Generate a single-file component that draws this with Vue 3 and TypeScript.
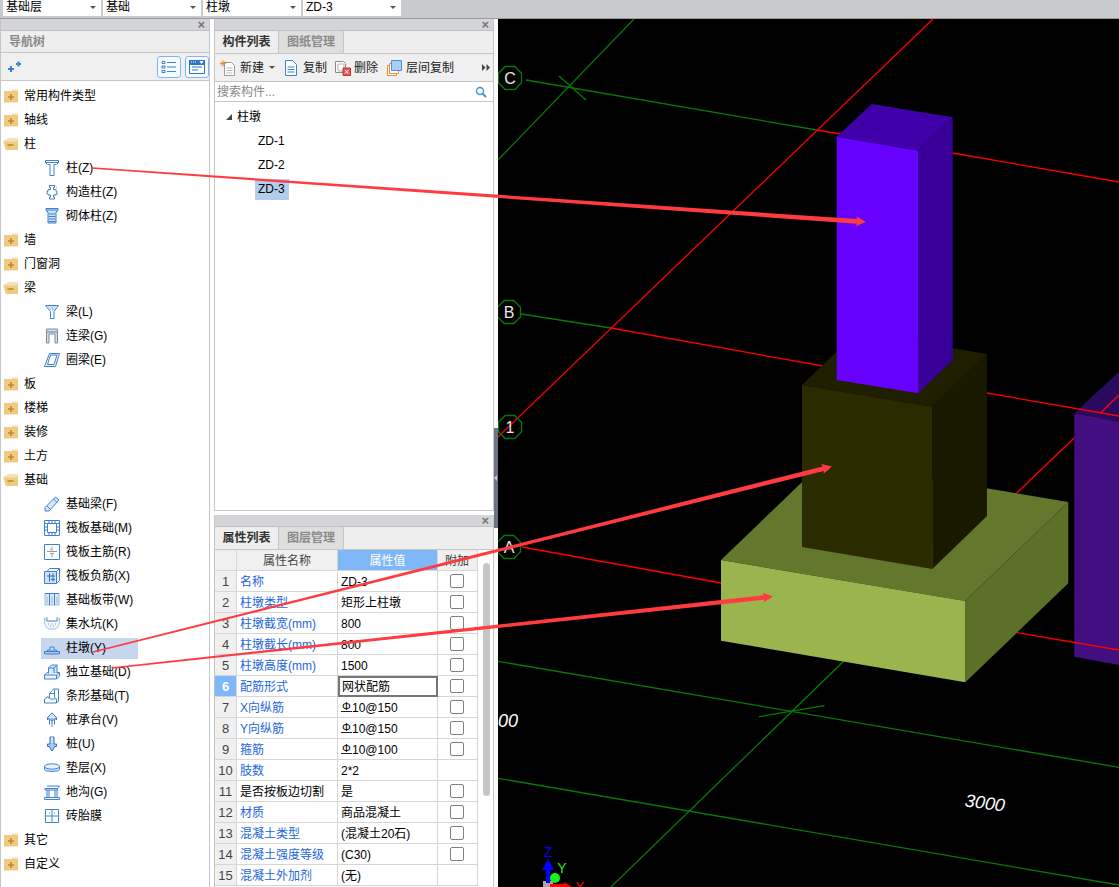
<template>
  <div class="app">
    <div class="topbar">
      <div v-for="d in dropdowns" :key="d" class="drop">
        <span>{{ d }}</span><i class="caret"></i>
      </div>
    </div>

    <div class="body">
      <!-- nav tree -->
      <section class="panel nav">
        <div class="panel-head"><span class="close">×</span></div>
        <div class="nav-title">导航树</div>
        <div class="nav-tools">
          <svg class="spark" viewBox="0 0 14 12" width="14" height="12">
            <path d="M0 8h6M3 5v6M8 3h5M10.500 .5v5" stroke="#3f80d0" stroke-width="2" fill="none" />
          </svg>
          <div class="nav-btns">
            <button class="view-btn">
              <svg viewBox="0 0 16 14" width="16" height="14">
                <path d="M1 1.500h3v2H1zM1 6h3v2H1zM1 10.500h3v2H1z" fill="none" stroke="#3f80d0" />
                <path d="M6 2.500h9M6 7h9M6 11.500h9" stroke="#3f80d0" />
              </svg>
            </button>
            <button class="view-btn">
              <svg viewBox="0 0 16 14" width="16" height="14">
                <path d="M.5 .5h15v13H.5z" fill="#fff" stroke="#2f74c8" />
                <path d="M.5 .5h15v4H.5z" fill="#2f74c8" stroke="#2f74c8" />
                <path d="M2 2h1M4 2h1M6 2h1M11 1.500h3l-1.500 2z" stroke="#fff" fill="#fff" />
                <path d="M3 7h10M3 10h6" stroke="#2f74c8" />
              </svg>
            </button>
          </div>
        </div>
        <div class="tree">
          <div v-for="row in navRows" :key="row.label" class="tree-row">
            <div v-if="row.kind !== 'item'" class="folder">
              <svg v-if="row.kind === 'closed'" viewBox="0 0 16 14" width="16" height="14">
                <path d="M9 .5h5.500v1.500H9z" fill="#f3d9a6" />
                <path d="M1 2h14v11.500H1z" fill="#efca80" />
                <path d="M8 5v6M5 8h6" stroke="#b98b2e" stroke-width="1.600" />
              </svg>
              <svg v-else viewBox="0 0 16 14" width="16" height="14">
                <path d="M1 3l5-2h9v10.500l-1 1.500H3z" fill="#f6e2b8" />
                <path d="M0 4.500h13l2 -1v8.500l-1 1H3z" fill="#efca80" />
                <path d="M4.500 8h6" stroke="#b98b2e" stroke-width="1.600" />
              </svg>
              <span>{{ row.label }}</span>
            </div>
            <div v-else class="item" :class="{ selected: row.selected }">
              <svg viewBox="0 0 16 16" width="16" height="16">
                <path
                  v-for="(s, i) in icons[row.icon!]"
                  :key="i"
                  :d="s.d"
                  :fill="s.fill ?? 'none'"
                  :stroke="s.stroke ?? '#3f80d0'"
                />
              </svg>
              <span>{{ row.label }}</span>
            </div>
          </div>
        </div>
      </section>

      <!-- middle column -->
      <div class="middle">
        <section class="panel comp">
          <div class="panel-head"><span class="close">×</span></div>
          <div class="tabs">
            <div class="tab active">构件列表</div>
            <div class="tab">图纸管理</div>
          </div>
          <div class="comp-tools">
            <div class="tool t-new">
              <svg viewBox="0 0 16 16" width="16" height="16">
                <path d="M4.500 2.500h7l3 3v10h-10z" fill="#fff" stroke="#9a9a9a" />
                <path d="M6.500 8h6M6.500 10.500h6M6.500 13h6" stroke="#b5b5b5" />
                <path d="M3 .5v6M0 3.500h6M1 1.500l4 4M5 1.500l-4 4" stroke="#f08a24" />
              </svg>
              <span>新建</span><i class="caret small"></i>
            </div>
            <div class="tool t-copy">
              <svg viewBox="0 0 14 16" width="14" height="16">
                <path d="M1.500 .5h7l4 4v11h-11z" fill="#fff" stroke="#3f80d0" />
                <path d="M3.500 7h7M3.500 9.500h7M3.500 12h7" stroke="#3f80d0" />
              </svg>
              <span>复制</span>
            </div>
            <div class="tool t-del">
              <svg viewBox="0 0 16 16" width="16" height="16">
                <path d="M.5 1.500h8l2 2v9h-10z" fill="#fff" stroke="#8a8a8a" />
                <path d="M3 4h6v7H3z" fill="none" stroke="#b5b5b5" />
                <path d="M8 8h7.500v7.500H8z" fill="#e0555a" stroke="#c33" />
                <path d="M10 10l3.500 3.500M13.500 10L10 13.500" stroke="#fff" />
              </svg>
              <span>删除</span>
            </div>
            <div class="tool t-floor">
              <svg viewBox="0 0 15 16" width="15" height="16">
                <path d="M.5 5.500h9v10h-9z" fill="#fff" stroke="#ef8a3a" />
                <path d="M2.500 3.500h9v10h-9z" fill="#fff" stroke="#ef8a3a" />
                <path d="M4.500 .5h10v10h-10z" fill="#a8cdf6" stroke="#4a8ee0" />
              </svg>
              <span>层间复制</span>
            </div>
            <svg class="more" viewBox="0 0 8 7" width="8" height="7">
              <path d="M0 0l3.500 3.500L0 7zM4.500 0L8 3.500 4.500 7z" fill="#444" />
            </svg>
          </div>
          <div class="search">
            <span>搜索构件...</span>
            <svg viewBox="0 0 12 12" width="12" height="12">
              <circle cx="5" cy="5" r="3.500" fill="none" stroke="#4a97cf" stroke-width="1.500" />
              <path d="M7.500 7.500L11 11" stroke="#4a97cf" stroke-width="2" />
            </svg>
          </div>
          <div class="comp-tree">
            <div class="comp-root"><i class="tri"></i>柱墩</div>
            <div v-for="c in comps" :key="c" class="comp-row">
              <span :class="{ picked: c === 'ZD-3' }">{{ c }}</span>
            </div>
          </div>
        </section>

        <section class="panel props">
          <div class="panel-head"><span class="close">×</span></div>
          <div class="tabs props-tabs">
            <div class="tab active">属性列表</div>
            <div class="tab">图层管理</div>
          </div>
          <div class="prop-wrap">
            <div class="prop-table">
              <div class="prop-row head">
                <div class="cell num"></div>
                <div class="cell name">属性名称</div>
                <div class="cell val">属性值</div>
                <div class="cell add">附加</div>
              </div>
              <div v-for="(p, i) in propRows" :key="p.name" class="prop-row">
                <div class="cell num" :class="{ cur: i === 5 }">{{ i + 1 }}</div>
                <div class="cell name" :class="{ plain: p.plain }">{{ p.name }}</div>
                <div class="cell val" :class="{ editing: i === 5 }">
                  <span v-if="p.rebar" class="rebar">Φ</span>{{ p.value }}
                </div>
                <div class="cell add"><i v-if="p.check" class="check"></i></div>
              </div>
            </div>
            <div class="scroll"><div class="thumb"></div></div>
          </div>
        </section>
      </div>

      <div class="splitter"><div class="grip"><i></i></div></div>

      <!-- 3d view -->
      <div class="view">
        <svg viewBox="498 19 621 868" width="621" height="868">
          <g fill="none" stroke-width="1.300">
            <path v-for="(l, i) in greenLines" :key="'g' + i" :d="l" stroke="#067a06" />
            <path v-for="(l, i) in redLines" :key="'r' + i" :d="l" stroke="#ff0000" />
          </g>

          <polygon points="1074.300,413.300 1119,371.700 1119,421.600" fill="#2a0a5e" />
          <polygon points="1074.300,413.300 1119,421.600 1119,665 1074.300,656.700" fill="#430f80" />
          <path d="M1100 413.500L1119 395M987 393L1119 416M1016.700 632.700L1119 650" stroke="#ff0000" stroke-width="1.300" fill="none" />

          <polygon points="721,560 824,461 1068.300,502 965.300,601" fill="#63772d" />
          <polygon points="965.300,601 1068.300,502 1068.300,583.300 965.300,682.300" fill="#5d7028" />
          <polygon points="721,560 965.300,601 965.300,682.300 721,640.700" fill="#9ab54e" />

          <polygon points="802,385 856.700,332.300 987,354 932.300,406.700" fill="#1f1f00" />
          <polygon points="932.300,406.700 987,354 987,516 932.300,569" fill="#191900" />
          <polygon points="802,385 932.300,406.700 932.300,569 802,547" fill="#2b2b00" />

          <polygon points="836.700,136.700 871.700,104 952.700,117.300 918.300,150.700" fill="#3f00aa" />
          <polygon points="918.300,150.700 952.700,117.300 952.700,360 918.300,393.300" fill="#380099" />
          <polygon points="836.700,136.700 918.300,150.700 918.300,393.300 836.700,380" fill="#6600ff" />

          <g v-for="a in axes" :key="a.label">
            <polygon :points="octagon(a.x, a.y)" fill="none" stroke="#067a06" stroke-width="1.300" />
            <text :x="a.x" :y="a.y + 6" class="axis-label">{{ a.label }}</text>
          </g>

          <text x="518" y="727" class="dim" text-anchor="end">00</text>
          <text x="985" y="809" class="dim" text-anchor="middle" transform="rotate(8 985 803)">3000</text>

          <!-- gizmo -->
          <text x="548" y="857" class="giz" fill="#0000ff" text-anchor="middle">Z</text>
          <path d="M543 881h10v6h-10z" fill="#a8a8a8" />
          <path d="M548 859l6 11h-4v13h-4v-13h-4z" fill="#0000ff" />
          <circle cx="555" cy="878" r="5" fill="#18f018" />
          <text x="562" y="873" class="giz" fill="#18f018" text-anchor="middle">Y</text>
          <path d="M550 884h14v-2l8 5h-22z" fill="#ff0000" />
          <text x="580" y="892" class="giz" fill="#ff0000" text-anchor="middle">X</text>
        </svg>
      </div>
    </div>

    <!-- annotation arrows drawn over the whole window -->
    <svg class="notes" viewBox="0 0 1119 887" width="1119" height="887">
      <polygon v-for="(a, i) in arrows" :key="i" :points="arrow(a)" fill="#ff3b40" />
    </svg>
  </div>
</template>

<script setup lang="ts">
type Shape = { d: string; fill?: string; stroke?: string }
type NavRow = {
  kind: 'closed' | 'open' | 'item'
  label: string
  icon?: string
  selected?: boolean
}

const dropdowns = ['基础层', '基础', '柱墩', 'ZD-3']

const folder = (label: string, kind: 'closed' | 'open' = 'closed'): NavRow => ({ kind, label })
const item = (label: string, icon: string, selected = false): NavRow => ({
  kind: 'item',
  label,
  icon,
  selected,
})

const navRows: NavRow[] = [
  folder('常用构件类型'),
  folder('轴线'),
  folder('柱', 'open'),
  item('柱(Z)', 'col'),
  item('构造柱(Z)', 'tie'),
  item('砌体柱(Z)', 'brick'),
  folder('墙'),
  folder('门窗洞'),
  folder('梁', 'open'),
  item('梁(L)', 'beam'),
  item('连梁(G)', 'link'),
  item('圈梁(E)', 'ring'),
  folder('板'),
  folder('楼梯'),
  folder('装修'),
  folder('土方'),
  folder('基础', 'open'),
  item('基础梁(F)', 'pencil'),
  item('筏板基础(M)', 'raft'),
  item('筏板主筋(R)', 'rmain'),
  item('筏板负筋(X)', 'rneg'),
  item('基础板带(W)', 'strip'),
  item('集水坑(K)', 'pit'),
  item('柱墩(Y)', 'pier', true),
  item('独立基础(D)', 'iso'),
  item('条形基础(T)', 'bar'),
  item('桩承台(V)', 'cap'),
  item('桩(U)', 'pile'),
  item('垫层(X)', 'pad'),
  item('地沟(G)', 'ditch'),
  item('砖胎膜', 'mould'),
  folder('其它'),
  folder('自定义'),
]

const icons: Record<string, Shape[]> = {
  col: [{ d: 'M1.500 .5h13v2l-2 2h-2.500v11h-4v-11H3.500l-2-2zM1.500 2.500h13' }],
  tie: [
    { d: 'M5.500 1.500h5v2h-1v2h2.500v2h1v2h-1v1.500H9.500v2h1v2h-5v-2h1v-2H4v-1.500H3v-2h1v-2h2.500v-2h-1z' },
    { d: 'M11 1.500c2 1 2 3 1 4M13 7c1 2 1 3 0 5', stroke: '#b9cfe8' },
  ],
  brick: [
    { d: 'M2 .5h12v2l-2 1.500v11H4V4L2 2.500z', fill: '#cfe1f5' },
    { d: 'M2 2h12', stroke: '#3f80d0' },
    { d: 'M4.500 6h7M4.500 8.500h7M4.500 11h7M4.500 13.500h7', stroke: '#3f80d0' },
  ],
  beam: [
    { d: 'M1.500 1.500h13l-4.500 6v7H6.500v-7z' },
    { d: 'M3.500 3h9M5 5h6M8 3l1 4', stroke: '#9cc0e8' },
  ],
  link: [
    { d: 'M2.500 1v14h2.500V6h6v9h2.500V1z', fill: '#d7dde3', stroke: '#7f8c99' },
    { d: 'M3 4h10', stroke: '#3f80d0' },
  ],
  ring: [
    { d: 'M5.500 1.500h10l-4 13H.5z', fill: '#eaf2fb' },
    { d: 'M6.500 3h6.500l-3 9.500H3.500z', fill: '#fff' },
  ],
  pencil: [
    { d: 'M11.500 1l3.500 3L5 15H1v-3.500z', fill: '#dbe8f7' },
    { d: 'M9.500 3l3.500 3.500M3 10l3 3' },
  ],
  raft: [
    { d: 'M.5 .5h15v15H.5z', fill: '#fff' },
    { d: 'M3.500 3.500h9v9h-9z' },
    { d: 'M.5 3.500h3M.5 7h3M.5 10h3M12.500 3.500h3M12.500 7h3M12.500 10h3M5 .5v3M8 .5v3M11 .5v3M5 12.500v3M8 12.500v3M11 12.500v3' },
  ],
  rmain: [
    { d: 'M.5 .5h15v15H.5z', fill: '#fff' },
    { d: 'M8 2.500v4.500M8 9v4.500M3 7.500h10M6 9.500h4M6 5.500h1', stroke: '#9a9a9a' },
  ],
  rneg: [
    { d: 'M.5 3.500h12v12H.5z', fill: '#cfe1f5' },
    { d: 'M3 3.500l2.500-3h10v12l-3 3M12.500 3.500l3-3' },
    { d: 'M5.500 5.500v8M9 5.500v8M3 8h8M7 11.500h4', stroke: '#2f6cb8' },
  ],
  strip: [
    { d: 'M1 1.500h14v11.500H1z', fill: '#d9e7f6', stroke: '#9fbfe2' },
    { d: 'M1 1.500h14', stroke: '#3f80d0' },
    { d: 'M5.500 2v11M10.500 2v11', stroke: '#3f80d0' },
    { d: 'M3 4.500v7M8 4.500v7M13 4.500v7', stroke: '#9fbfe2' },
  ],
  pit: [
    { d: 'M.5 2c1 0 2 1 2 3h11c0-2 1-3 2-3v3c0 5-3 8-5 8H5.500c-2 0-5-3-5-8z', fill: '#f4f7fb', stroke: '#9fbfe2' },
    { d: 'M3 1v4h10V1M4 8h1M8 8h1M11 8h1M6 10h1M9 10h1', stroke: '#6d9bd0' },
  ],
  pier: [
    { d: 'M.5 11.500h15v2.500H.5z', fill: '#a9c7ea' },
    { d: 'M3.500 11.500v-1.500h9v1.500' },
    { d: 'M6 10V7h4v3', fill: '#cfe1f5' },
  ],
  iso: [
    { d: 'M.5 11l2.500-2.500h12.500v3.500l-3 3H.5z', fill: '#eaf2fb' },
    { d: 'M.5 11h12v4M12.500 11l3-2.500' },
    { d: 'M4.500 9.500V4L7.500 1h5.500v7.500', fill: '#dbe8f7' },
    { d: 'M4.500 4h5.500v5M10 4l3-3' },
  ],
  bar: [
    { d: 'M.5 15v-4l3-2 2 .5v-4L9.500 1h5v12l-2 2z', fill: '#fff' },
    { d: 'M5.500 5.500h5v-4M10.500 5.500v4l2 1.500v4M3.500 9l3 2h5' },
  ],
  cap: [
    { d: 'M8 1l4.500 4.500L8 9 3.500 5.500z', fill: '#dbe8f7' },
    { d: 'M3.500 5.500v2.500L5 6.500M12.500 5.500V8L11 6.500M8 6v9M5.500 7.500v5M10.500 7.500v5' },
  ],
  pile: [
    { d: 'M6 1h4v7h2.500v2.500h-2l-1 2.500L8 15l-1.500-2-1-2.500h-2V8H6z', fill: '#a9c7ea', stroke: '#2f74c8' },
    { d: 'M8 1v6', stroke: '#fff' },
  ],
  pad: [
    { d: 'M.5 6.500v3c0 2.500 15 2.500 15 0v-3z', fill: '#dbe8f7' },
    { d: 'M.5 6.500c0-3.500 15-3.500 15 0s-15 3.500-15 0z', fill: '#eaf2fb' },
  ],
  ditch: [
    { d: 'M.5 13.500h15v2H.5z', fill: '#fff' },
    { d: 'M1 4.500h12.500v1.500H1zM13.500 4.500l2-2.500M3 6v7.500h2V6M11 6v7.500h2V6M3 2h12.500' },
  ],
  mould: [{ d: 'M1.500 1.500h13v13h-13zM8 1.500v13M1.500 8h13M5 5h1M10 5h1' }],
}

const comps = ['ZD-1', 'ZD-2', 'ZD-3']

type PropRow = { name: string; value: string; check?: boolean; plain?: boolean; rebar?: boolean }
const propRows: PropRow[] = [
  { name: '名称', value: 'ZD-3', check: true },
  { name: '柱墩类型', value: '矩形上柱墩', check: true },
  { name: '柱墩截宽(mm)', value: '800', check: true },
  { name: '柱墩截长(mm)', value: '800', check: true },
  { name: '柱墩高度(mm)', value: '1500', check: true },
  { name: '配筋形式', value: '网状配筋', check: true },
  { name: 'X向纵筋', value: '10@150', check: true, rebar: true },
  { name: 'Y向纵筋', value: '10@150', check: true, rebar: true },
  { name: '箍筋', value: '10@100', check: true, rebar: true },
  { name: '肢数', value: '2*2' },
  { name: '是否按板边切割', value: '是', check: true, plain: true },
  { name: '材质', value: '商品混凝土', check: true },
  { name: '混凝土类型', value: '(混凝土20石)', check: true },
  { name: '混凝土强度等级', value: '(C30)', check: true },
  { name: '混凝土外加剂', value: '(无)' },
]

const greenLines = [
  'M526 80L816.700 130',
  'M521 314L611 328',
  'M498 661.300L1119 767.300',
  'M498 778.300L1119 885',
  'M843.600 661.300L611 887',
  'M759 716.700L824.500 705.700',
  'M634 19L498 160',
  'M559 76L586 100',
]
const redLines = [
  'M816.700 130L840 134M952.700 153L1119 182',
  'M611 328L823 366',
  'M522 547L721 583',
  'M498 437L933 19',
  'M1016.700 493L1119 395',
]

const axes = [
  { label: 'C', x: 510, y: 78 },
  { label: 'B', x: 509, y: 312 },
  { label: '1', x: 510, y: 427 },
  { label: 'A', x: 509, y: 547 },
]

function octagon(cx: number, cy: number) {
  const r = 12.500
  const pts: string[] = []
  for (let i = 0; i < 8; i++) {
    const t = ((i + 0.5) * Math.PI) / 4
    pts.push(`${(cx + r * Math.cos(t)).toFixed(1)},${(cy + r * Math.sin(t)).toFixed(1)}`)
  }
  return pts.join(' ')
}

type Arrow = { x1: number; y1: number; x2: number; y2: number }
const arrows: Arrow[] = [
  { x1: 92, y1: 168, x2: 866, y2: 222 },
  { x1: 93, y1: 652, x2: 832, y2: 466.500 },
  { x1: 112, y1: 668, x2: 773, y2: 596.500 },
]

// tapered stroke with a barbed head, thin at the start
function arrow({ x1, y1, x2, y2 }: Arrow) {
  const len = Math.hypot(x2 - x1, y2 - y1)
  const ux = (x2 - x1) / len
  const uy = (y2 - y1) / len
  const at = (along: number, side: number) =>
    `${(x2 - ux * along - uy * side).toFixed(1)},${(y2 - uy * along + ux * side).toFixed(1)}`
  return [
    at(len, -0.8),
    at(9, -2.3),
    at(10, -5),
    at(0, 0),
    at(10, 5),
    at(9, 2.3),
    at(len, 0.8),
  ].join(' ')
}
</script>

<style>
html,
body {
  margin: 0;
  background: #fff;
}
</style>

<style scoped>
.app {
  position: relative;
  display: flex;
  flex-direction: column;
  width: 1119px;
  height: 887px;
  overflow: hidden;
  background: #fff;
  font: 12px/16px 'Liberation Sans', 'Noto Sans CJK SC', sans-serif;
  color: #000;
}

.topbar {
  display: flex;
  flex: none;
  gap: 2px;
  box-sizing: border-box;
  height: 19px;
  padding: 0 0 0 3px;
  background: #c9cacc;
  border-bottom: 1px solid #9c9c9c;
}
.drop {
  display: flex;
  align-items: center;
  justify-content: space-between;
  box-sizing: border-box;
  width: 98px;
  height: 16px;
  padding: 0 5px 2px 3px;
  background: #fff;
}
.caret {
  width: 0;
  height: 0;
  border: 3px solid transparent;
  border-top: 3.500px solid #555;
  border-bottom: 0;
}

.body {
  display: flex;
  flex: 1;
  min-height: 0;
}

.panel {
  display: flex;
  flex-direction: column;
  box-sizing: border-box;
  border-left: 1px solid #c6c6c6;
  border-right: 1px solid #c6c6c6;
}
.panel-head {
  flex: none;
  display: flex;
  justify-content: flex-end;
  align-items: center;
  height: 11px;
  padding-right: 4px;
  background: #d3d5d9;
  border-bottom: 1px solid #c0c0c0;
}
.close {
  font: bold 13px/11px 'Liberation Sans', sans-serif;
  color: #777;
}

.nav {
  width: 210px;
  flex: none;
  margin-right: 4px;
}
.nav-title {
  flex: none;
  height: 21px;
  padding-left: 8px;
  line-height: 23px;
  color: #8a8a8a;
  font-weight: bold;
  background: #eee;
  border-bottom: 1px solid #c6c6c6;
}
.nav-tools {
  flex: none;
  display: flex;
  align-items: center;
  justify-content: space-between;
  height: 27px;
  padding: 0 0 0 7px;
  background: #f0f0f0;
  border-bottom: 1px solid #c6c6c6;
}
.nav-btns {
  display: flex;
  gap: 4px;
}
.view-btn {
  display: flex;
  align-items: center;
  justify-content: center;
  box-sizing: border-box;
  width: 24px;
  height: 22px;
  padding: 0;
  background: #f6faff;
  border: 1px solid #7db7f3;
  border-radius: 3px;
}
.tree {
  flex: 1;
  padding-top: 3px;
}
.tree-row {
  display: flex;
  align-items: center;
  height: 24px;
}
.folder {
  display: flex;
  align-items: center;
  gap: 5px;
  padding-left: 2px;
}
.item {
  display: flex;
  align-items: center;
  gap: 6px;
  box-sizing: border-box;
  width: 97px;
  height: 21px;
  margin-left: 40px;
  padding-left: 3px;
  white-space: nowrap;
}
.item.selected {
  background: #c6d6ee;
}

.middle {
  display: flex;
  flex-direction: column;
  flex: none;
  gap: 4px;
  width: 280px;
}
.comp {
  height: 492px;
  border-bottom: 1px solid #c6c6c6;
}
.props {
  flex: 1;
  min-height: 0;
}
.tabs {
  display: flex;
  flex: none;
  height: 22px;
  background: #eee;
  border-bottom: 1px solid #c6c6c6;
}
.tab {
  box-sizing: border-box;
  width: 65px;
  line-height: 23px;
  text-align: center;
  color: #8a8a8a;
  font-weight: bold;
  background: #dedede;
  border-right: 1px solid #c6c6c6;
}
.tab.active {
  width: 64px;
  color: #333;
  background: #eee;
}
.comp-tools {
  position: relative;
  flex: none;
  display: flex;
  align-items: center;
  height: 27px;
  background: #f0f0f0;
  border-bottom: 1px solid #c6c6c6;
}
.tool {
  display: flex;
  align-items: center;
  gap: 5px;
  color: #222;
}
.t-new {
  width: 64px;
  padding-left: 5px;
  gap: 4px;
}
.t-copy {
  width: 51px;
}
.t-del {
  width: 52px;
  gap: 3px;
}
.t-floor {
  gap: 4px;
}
.caret.small {
  margin-left: 1px;
}
.more {
  margin-left: auto;
  margin-right: 3px;
}
.search {
  flex: none;
  display: flex;
  align-items: center;
  justify-content: space-between;
  height: 19px;
  padding: 0 6px 0 2px;
  color: #888;
  background: #fff;
  border-bottom: 1px solid #c6c6c6;
}
.comp-tree {
  flex: 1;
  padding-top: 3px;
}
.comp-root {
  display: flex;
  align-items: center;
  height: 24px;
  padding-left: 11px;
  gap: 5px;
}
.tri {
  width: 0;
  height: 0;
  border-right: 6px solid #444;
  border-top: 6px solid transparent;
}
.comp-row {
  display: flex;
  align-items: center;
  height: 24px;
  padding-left: 40px;
}
.comp-row span {
  height: 21px;
  padding: 0 4px 0 3px;
  line-height: 21px;
}
.comp-row .picked {
  background: #b3cdec;
}

.prop-wrap {
  display: flex;
  flex: 1;
  min-height: 0;
  overflow: hidden;
}
.prop-table {
  flex: none;
  width: 263px;
}
.prop-row {
  display: grid;
  grid-template-columns: 22px 101px 100px 40px;
  height: 21px;
}
.cell {
  box-sizing: border-box;
  display: flex;
  align-items: center;
  padding: 2px 0 0 3px;
  white-space: nowrap;
  border-right: 1px solid #d6d6d6;
  border-bottom: 1px solid #d6d6d6;
}
.cell.num {
  justify-content: center;
  padding-left: 0;
  color: #444;
  font-size: 13px;
  background: #f0f0f0;
}
.cell.num.cur {
  color: #fff;
  font-weight: bold;
  background: #7fb8f8;
}
.cell.name {
  color: #2466dc;
}
.cell.name.plain {
  color: #000;
}
.cell.add {
  justify-content: center;
  padding-left: 0;
  padding-right: 1px;
}
.cell.editing {
  border: 2px solid #757575;
  padding: 1px 0 0 2px;
}
.head .cell {
  justify-content: center;
  padding-left: 0;
  color: #444;
  background: #f0f0f0;
}
.head .cell.val {
  color: #fff;
  background: #7fb8f8;
}
.head .cell.name {
  color: #444;
}
.check {
  box-sizing: border-box;
  width: 14px;
  height: 14px;
  margin-top: -2px;
  border: 1px solid #808080;
  border-radius: 2px;
}
.rebar {
  width: 11px;
  margin-top: -3px;
  font-size: 11px;
  line-height: 10px;
  border-bottom: 1px solid #222;
  text-align: center;
}
.scroll {
  flex: 1;
  padding: 13px 3px 0 5px;
}
.thumb {
  height: 233px;
  background: #c6c6c6;
  border-radius: 4px;
}

.splitter {
  position: relative;
  flex: none;
  width: 4px;
  background: #fafafa;
}
.grip {
  position: absolute;
  top: 409px;
  left: 0;
  display: flex;
  align-items: center;
  width: 4px;
  height: 100px;
  background: #6b7480;
}
.grip i {
  width: 0;
  height: 0;
  border: 3px solid transparent;
  border-right: 3px solid #c8ccd0;
  border-left: 0;
}

.view {
  flex: 1;
  min-width: 0;
  background: #000;
  overflow: hidden;
}
.view svg {
  display: block;
}
.axis-label {
  font: 16px 'Liberation Sans', sans-serif;
  fill: #e8e8e8;
  text-anchor: middle;
}
.dim {
  font: italic 18px 'Liberation Sans', sans-serif;
  fill: #fff;
}
.giz {
  font: 14px 'Liberation Sans', sans-serif;
}

.notes {
  position: absolute;
  top: 0;
  left: 0;
  pointer-events: none;
}
</style>
